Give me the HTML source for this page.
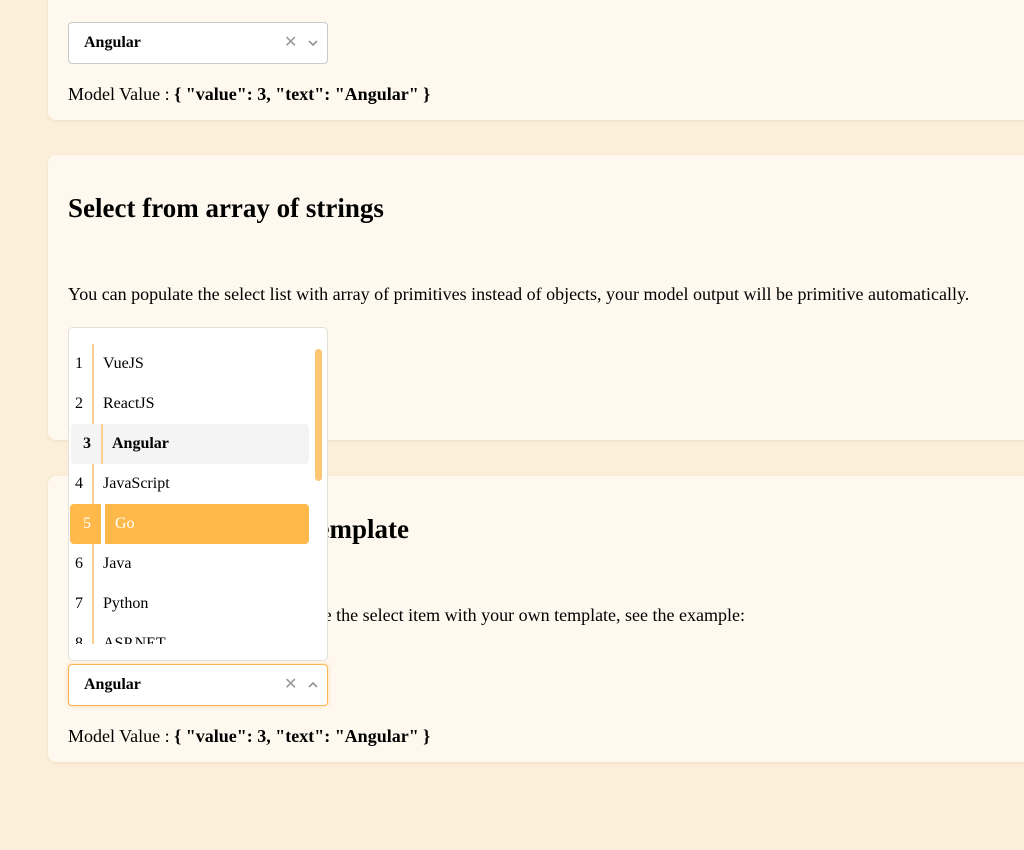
<!DOCTYPE html>
<html><head><meta charset="utf-8"><style>
html,body{margin:0;padding:0}
body{width:1024px;height:850px;background:#fcefda;font-family:"Liberation Serif",serif;position:relative;overflow:hidden;color:#000}
.card{position:absolute;left:48px;width:1000px;background:#fef8ee;border-radius:8px;box-shadow:0 1px 3px rgba(200,170,120,.25)}
.sel{position:absolute;left:68px;width:258px;height:40px;background:#fff;border:1px solid #c9c9c9;border-radius:4px;box-sizing:content-box}
.sel b{position:absolute;left:15px;top:11px;font-size:16px}
.sel .x{position:absolute;left:215px;top:9px;color:#999;font-family:"DejaVu Sans",sans-serif;font-size:16px}
.sel svg{position:absolute;left:238px;top:15px}
.mv{position:absolute;left:68px;font-size:18px}
h2{position:absolute;left:68px;margin:0;font-size:27px;font-weight:bold;white-space:nowrap}
p{position:absolute;left:68px;margin:0;font-size:18px;white-space:nowrap}
.ra{overflow:hidden;text-align:right;direction:rtl}
.ra span{direction:ltr;unicode-bidi:embed}
.dd{position:absolute;left:68px;top:327px;width:258px;height:332px;background:#fff;border:1px solid #e4e0d8;border-radius:5px;overflow:hidden}
.list{position:absolute;left:0;top:16px;width:258px;height:300px;overflow:hidden}
.it{position:absolute;left:0;width:240px;height:40px;font-size:16px}
.it .n{position:absolute;left:6px;top:11px}
.it .t{position:absolute;left:34px;top:11px}
.line{position:absolute;left:23px;top:0;width:2px;height:300px;background:#fbd08e}
.sb{position:absolute;left:246px;top:21px;width:7px;height:132px;background:#ffc773;border-radius:4px}
</style></head><body>
<div class="card" style="top:-20px;height:140px"></div>
<div class="sel" style="top:22px"><b>Angular</b><span class="x">✕</span><svg width="12" height="10" viewBox="0 0 12 10"><path d="M2 3l4 4 4-4" stroke="#999" stroke-width="1.8" fill="none"/></svg></div>
<div class="mv" style="top:84px">Model Value : <b>{ "value": 3, "text": "Angular" }</b></div>

<div class="card" style="top:155px;height:285px"></div>
<h2 style="top:193px">Select from array of strings</h2>
<p style="top:284px">You can populate the select list with array of primitives instead of objects, your model output will be primitive automatically.</p>
<div class="sel" style="top:347px"></div>

<div class="card" style="top:476px;height:286px"></div>
<h2 class="ra" style="top:514px;width:341px"><span>Select with custom item template</span></h2>
<p class="ra" style="top:605px;width:677px"><span>You can customize and replace the select item with your own template, see the example:</span></p>
<div class="sel" style="top:664px;border-color:#ffb453;box-shadow:0 0 4px rgba(255,170,60,.4)"><b>Angular</b><span class="x">✕</span><svg width="12" height="10" viewBox="0 0 12 10"><path d="M2 7l4-4 4 4" stroke="#999" stroke-width="1.8" fill="none"/></svg></div>
<div class="mv" style="top:726px">Model Value : <b>{ "value": 3, "text": "Angular" }</b></div>

<div class="dd"><div class="list">
<div class="line"></div>
<div class="it" style="top:0"><span class="n">1</span><span class="t">VueJS</span></div>
<div class="it" style="top:40px"><span class="n">2</span><span class="t">ReactJS</span></div>
<div class="it" style="top:80px;left:2px;width:238px;background:#f4f4f4;border-radius:4px;font-weight:bold"><span class="n" style="left:12px">3</span><span style="position:absolute;left:30px;top:0;width:2px;height:40px;background:#fbd08e"></span><span class="t" style="left:41px">Angular</span></div>
<div class="it" style="top:120px"><span class="n">4</span><span class="t">JavaScript</span></div>
<div class="it" style="top:160px;left:1px;width:239px;background:#ffb84a;border-radius:4px;color:#fff"><span class="n" style="left:13px">5</span><span style="position:absolute;left:31px;top:0;width:4px;height:40px;background:#fff"></span><span class="t" style="left:45px">Go</span></div>
<div class="it" style="top:200px"><span class="n">6</span><span class="t">Java</span></div>
<div class="it" style="top:240px"><span class="n">7</span><span class="t">Python</span></div>
<div class="it" style="top:280px"><span class="n">8</span><span class="t">ASP.NET</span></div>
</div><div class="sb"></div></div>
</body></html>
